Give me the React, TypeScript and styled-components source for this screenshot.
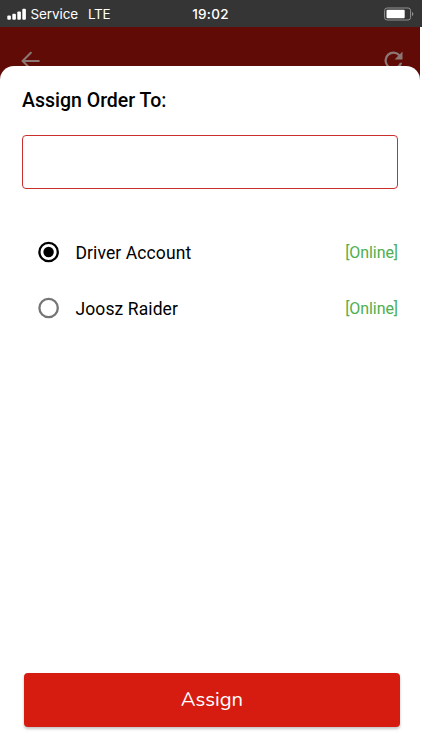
import React, { useState } from "react";
import styled, { createGlobalStyle } from "styled-components";

const GlobalStyle = createGlobalStyle`
  * { box-sizing: border-box; }
  body { margin: 0; background: #fff; overflow: hidden; }
`;

const Screen = styled.main`
  width: 422px;
  height: 750px;
  display: flex;
  flex-direction: column;
  background: #fff;
  color: #000;
  font-family: Roboto, sans-serif;
`;

const StatusBar = styled.header`
  height: 27px;
  flex: none;
  display: grid;
  grid-template-columns: 1fr auto 1fr;
  align-items: center;
  padding: 0 8px 0 7px;
  background: #353535;
  color: #fff;
  font: 400 13.5px/27px Inter, sans-serif;
`;

const Carrier = styled.div`
  display: flex;
  align-items: center;
  svg { margin-right: 3.5px; }
`;

const CarrierName = styled.span`
  width: 57.5px;
  padding-top: 1px;
  letter-spacing: -0.1px;
`;

const Network = styled.span`
  padding-top: 1px;
  letter-spacing: -0.3px;
`;

const Clock = styled.time`
  padding-top: 1px;
  font-weight: 500;
  letter-spacing: 0.3px;
`;

const Battery = styled.svg`
  justify-self: end;
`;

const AppBar = styled.nav`
  height: 39px;
  flex: none;
  display: flex;
  align-items: flex-start;
  justify-content: space-between;
  width: 420px;
  padding: 20px 13px 0 18px;
  overflow: hidden;
  background: #610b07;
`;

const Backdrop = styled.div`
  width: 420px;
  flex: 1;
  display: flex;
  background: linear-gradient(#610b07 20px, #fff 20px);
`;

const Sheet = styled.section`
  flex: 1;
  display: flex;
  flex-direction: column;
  padding: 23px 20px 23.5px 22px;
  border-radius: 14px 14px 0 0;
  background: #fff;
`;

const Title = styled.h1`
  margin: 0;
  height: 24px;
  font-size: 19.5px;
  line-height: 24px;
  font-weight: 500;
  letter-spacing: 0;
`;

const SearchField = styled.input`
  width: 376px;
  height: 54px;
  margin-top: 22px;
  padding: 0 14px;
  border: 1px solid #c9302c;
  border-radius: 4px;
  outline: none;
  background: #fff;
  font: 400 17px Roboto, sans-serif;
`;

const DriverList = styled.div`
  margin-top: 35px;
  width: 376px;
`;

const DriverRow = styled.label`
  height: 56px;
  display: flex;
  align-items: center;
  padding-left: 16px;
`;

const HiddenRadio = styled.input`
  appearance: none;
  width: 0;
  height: 0;
  margin: 0;
`;

const RadioIcon = styled.svg`
  flex: none;
  margin-right: 15.5px;
`;

const DriverName = styled.span`
  flex: 1;
  padding-top: 1px;
  font-size: 17.5px;
  line-height: 22px;
  letter-spacing: 0.1px;
`;

const Status = styled.span`
  padding-top: 1px;
  color: #4caf50;
  font-size: 16px;
  line-height: 22px;
  letter-spacing: -0.08px;
`;

const AssignButton = styled.button`
  width: 376px;
  height: 54px;
  margin: auto 0 0 2px;
  padding: 0 0 2px;
  border: 0;
  border-radius: 4px;
  background: #d61b10;
  color: #fff;
  box-shadow: 0 2px 3px rgba(0, 0, 0, 0.24);
  font: 400 20.3px/52px Nunito, "Noto Sans", sans-serif;
`;

const drivers = ["Driver Account", "Joosz Raider"];

export default function App() {
  const [selected, setSelected] = useState(0);
  return (
    <Screen>
      <GlobalStyle />
      <StatusBar>
        <Carrier>
          <svg width="20" height="12" viewBox="0 0 20 12" fill="#fff">
            <rect x="0.3" y="7.5" width="3.6" height="4.2" rx="1" />
            <rect x="5.3" y="5.7" width="3.6" height="6" rx="1" />
            <rect x="10.3" y="3.4" width="3.6" height="8.3" rx="1" />
            <rect x="15.3" y="0.8" width="3.6" height="10.9" rx="1" />
          </svg>
          <CarrierName>Service</CarrierName>
          <Network>LTE</Network>
        </Carrier>
        <Clock>19:02</Clock>
        <Battery width="30" height="14" viewBox="0 0 30 14">
          <rect x="0.6" y="1" width="26" height="12" rx="2.5" fill="none" stroke="#929292" />
          <rect x="2.5" y="2.8" width="18.2" height="8.4" rx="1" fill="#fff" />
          <path d="M28 5c1.8.7 1.8 3.3 0 4z" fill="#929292" />
        </Battery>
      </StatusBar>
      <AppBar>
        <svg width="25" height="25" viewBox="0 0 25 25" fill="none" stroke="#8d7775" strokeWidth="2" strokeLinecap="round">
          <path d="M20.8 14H4.7M12.8 5.8 4.6 14l8.2 8.2" />
        </svg>
        <svg width="27" height="27" viewBox="0 0 24 24" fill="#8d7775">
          <path d="M17.65 6.35A7.96 7.96 0 0 0 12 4a8 8 0 1 0 7.73 10h-2.08A6 6 0 1 1 12 6c1.66 0 3.14.69 4.22 1.78L13 11h7V4z" />
        </svg>
      </AppBar>
      <Backdrop>
        <Sheet>
          <Title>Assign Order To:</Title>
          <SearchField aria-label="Search drivers" />
          <DriverList role="radiogroup">
            {drivers.map((name, index) => (
              <DriverRow key={name}>
                <HiddenRadio type="radio" name="driver" checked={selected === index} onChange={() => setSelected(index)} />
                <RadioIcon width="22" height="22" viewBox="0 0 22 22">
                  <circle cx="10.6" cy="11" r="9.2" fill="none" stroke={selected === index ? "#000" : "#757575"} strokeWidth="2.3" />
                  {selected === index && <circle cx="10.6" cy="11" r="5.2" />}
                </RadioIcon>
                <DriverName>{name}</DriverName>
                <Status>[Online]</Status>
              </DriverRow>
            ))}
          </DriverList>
          <AssignButton>Assign</AssignButton>
        </Sheet>
      </Backdrop>
    </Screen>
  );
}
